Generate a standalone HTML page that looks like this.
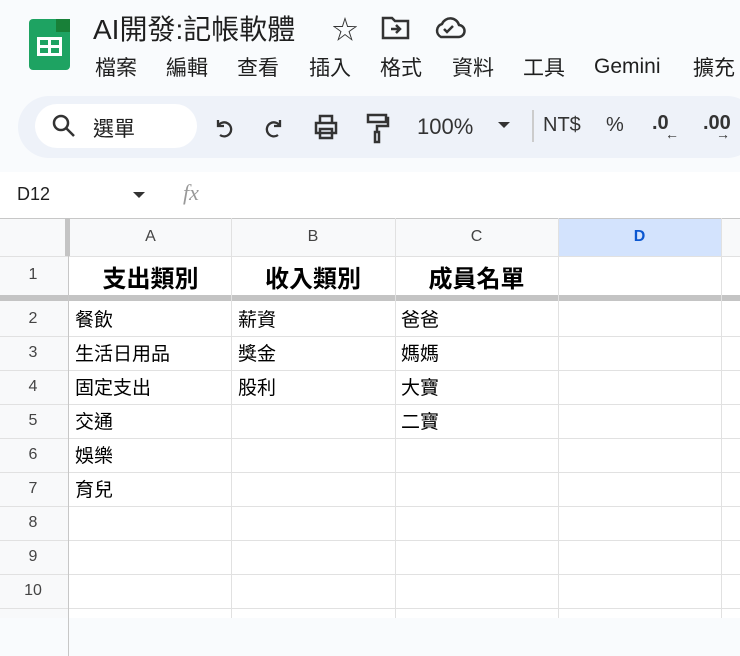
<!DOCTYPE html>
<html><head><meta charset="utf-8"><style>
*{margin:0;padding:0;box-sizing:border-box}
body{width:740px;height:617px;overflow:hidden;background:#f9fbfd;font-family:"Liberation Sans","Noto Sans CJK TC",sans-serif;position:relative;color:#1f1f1f}
.a{position:absolute}
.grid{position:absolute;left:0;top:218px;width:740px;height:400px;background:#fff}
.hl{position:absolute;background:#e1e1e1}
.cell{position:absolute;font-size:19px;color:#000}
.rn{position:absolute;left:0;width:66px;text-align:center;font-size:16px;color:#444}
.ch{position:absolute;top:0;height:38px;line-height:38px;text-align:center;font-size:16px;color:#444}
</style></head><body>
<div class="a" style="left:29px;top:19px;width:41px;height:51px;background:#1ea362;border-radius:4px;clip-path:polygon(0 0,70% 0,100% 25%,100% 100%,0 100%)"></div>
<div class="a" style="left:56px;top:19px;width:14px;height:13px;background:#188038"></div>
<div class="a" style="left:37px;top:37px;width:25px;height:19px;border:3px solid #fff;"></div>
<div class="a" style="left:37px;top:45px;width:25px;height:3px;background:#fff"></div>
<div class="a" style="left:48px;top:37px;width:3px;height:19px;background:#fff"></div>
<div class="a" style="left:93px;top:8px;font-size:28px;color:#1f1f1f">AI開發:記帳軟體</div>
<div class="a" style="left:332px;top:10px;font-size:26px;color:#333">☆</div>
<svg class="a" style="left:380px;top:14px" width="32" height="28" viewBox="0 0 32 28"><path d="M3 4h9l3 3h13v17H3z" fill="none" stroke="#333" stroke-width="2.5"/><path d="M11 15h9M16 11l4 4-4 4" fill="none" stroke="#333" stroke-width="2.5"/></svg>
<svg class="a" style="left:432px;top:14px" width="34" height="26" viewBox="0 0 34 26"><path d="M9 23h17a6 6 0 0 0 1-12 9 9 0 0 0-17-1 7 7 0 0 0-1 13z" fill="none" stroke="#333" stroke-width="2.5"/><path d="M12 15l3 3 6-6" fill="none" stroke="#333" stroke-width="2.5"/></svg>
<div class="a" style="left:95px;top:52px;font-size:21px;color:#1f1f1f;white-space:nowrap">
<span style="position:absolute;left:0">檔案</span><span style="position:absolute;left:71px">編輯</span><span style="position:absolute;left:142px">查看</span><span style="position:absolute;left:214px">插入</span><span style="position:absolute;left:285px">格式</span><span style="position:absolute;left:357px">資料</span><span style="position:absolute;left:428px">工具</span><span style="position:absolute;left:499px;top:3px">Gemini</span><span style="position:absolute;left:598px">擴充</span></div>
<div class="a" style="left:18px;top:96px;width:740px;height:62px;background:#eef2f9;border-radius:31px"></div>
<div class="a" style="left:35px;top:104px;width:162px;height:44px;background:#fff;border-radius:22px"></div>
<svg class="a" style="left:51px;top:113px" width="26" height="26" viewBox="0 0 26 26"><circle cx="10" cy="10" r="7" fill="none" stroke="#333" stroke-width="2.5"/><path d="M15 15l8 8" stroke="#333" stroke-width="2.5"/></svg>
<div class="a" style="left:93px;top:113px;font-size:21px">選單</div>
<svg class="a" style="left:212px;top:116px" width="24" height="24" viewBox="0 0 24 24"><path d="M6 4v6h6M6 10a7 7 0 1 1 2 9" fill="none" stroke="#333" stroke-width="2.3"/></svg>
<svg class="a" style="left:262px;top:116px" width="24" height="24" viewBox="0 0 24 24"><path d="M18 4v6h-6M18 10a7 7 0 1 0-2 9" fill="none" stroke="#333" stroke-width="2.3"/></svg>
<svg class="a" style="left:312px;top:113px" width="28" height="28" viewBox="0 0 28 28"><path d="M8 3h12v7H8zM4 10h20v10H4zM8 16h12v9H8z" fill="none" stroke="#333" stroke-width="2.5"/></svg>
<svg class="a" style="left:364px;top:112px" width="26" height="32" viewBox="0 0 26 32"><path d="M4 3h18v7H4zM22 6h2v8H13v6M11 20h4v10h-4z" fill="none" stroke="#333" stroke-width="2.5"/></svg>
<div class="a" style="left:417px;top:114px;font-size:22px;color:#333">100%</div>
<div class="a" style="left:498px;top:122px;width:0;height:0;border-left:6px solid transparent;border-right:6px solid transparent;border-top:6px solid #333"></div>
<div class="a" style="left:532px;top:110px;width:2px;height:32px;background:#ccc"></div>
<div class="a" style="left:543px;top:114px;font-size:20px;color:#333">NT$</div>
<div class="a" style="left:606px;top:114px;font-size:20px;color:#333">%</div>
<div class="a" style="left:652px;top:112px;font-size:20px;color:#333;font-weight:bold">.0</div>
<div class="a" style="left:665px;top:126px;font-size:14px;color:#333">←</div>
<div class="a" style="left:703px;top:112px;font-size:20px;color:#333;font-weight:bold">.00</div>
<div class="a" style="left:716px;top:126px;font-size:14px;color:#333">→</div>
<div class="a" style="left:0;top:172px;width:740px;height:46px;background:#fff"></div>
<div class="a" style="left:17px;top:184px;font-size:18px">D12</div>
<div class="a" style="left:133px;top:192px;border-left:6px solid transparent;border-right:6px solid transparent;border-top:6px solid #333"></div>
<div class="a" style="left:183px;top:180px;font-size:22px;color:#999;font-family:'Liberation Serif',serif;font-style:italic">fx</div>
<div class="grid">
<div class="a" style="left:0;top:0;width:740px;height:38px;background:#f8f9fa"></div>
<div class="a" style="left:0;top:0;width:68px;height:400px;background:#f8f9fa"></div>
<div class="a" style="left:558px;top:0;width:163px;height:38px;background:#d3e3fd"></div>
<div class="hl" style="left:0;top:0;width:740px;height:1px;background:#c7c7c7"></div>
<div class="hl" style="left:0;top:38px;width:740px;height:1px"></div>
<div class="hl" style="left:0;top:77px;width:740px;height:6px;background:#c4c4c4"></div>
<div class="hl" style="left:0;top:118px;width:740px;height:1px"></div>
<div class="hl" style="left:0;top:152px;width:740px;height:1px"></div>
<div class="hl" style="left:0;top:186px;width:740px;height:1px"></div>
<div class="hl" style="left:0;top:220px;width:740px;height:1px"></div>
<div class="hl" style="left:0;top:254px;width:740px;height:1px"></div>
<div class="hl" style="left:0;top:288px;width:740px;height:1px"></div>
<div class="hl" style="left:0;top:322px;width:740px;height:1px"></div>
<div class="hl" style="left:0;top:356px;width:740px;height:1px"></div>
<div class="hl" style="left:0;top:390px;width:740px;height:1px"></div>
<div class="hl" style="left:65px;top:0;width:5px;height:38px;background:#c4c4c4"></div>
<div class="hl" style="left:68px;top:38px;width:1px;height:400px;background:#c7c7c7"></div>
<div class="hl" style="left:231px;top:0;width:1px;height:400px"></div>
<div class="hl" style="left:395px;top:0;width:1px;height:400px"></div>
<div class="hl" style="left:558px;top:0;width:1px;height:400px"></div>
<div class="hl" style="left:721px;top:0;width:1px;height:400px"></div>
<div class="ch" style="left:70px;width:161px">A</div>
<div class="ch" style="left:231px;width:164px">B</div>
<div class="ch" style="left:395px;width:163px">C</div>
<div class="ch" style="left:558px;width:163px;color:#0b57d0;font-weight:bold">D</div>
<div class="rn" style="top:48px">1</div>
<div class="rn" style="top:92px">2</div>
<div class="rn" style="top:126px">3</div>
<div class="rn" style="top:160px">4</div>
<div class="rn" style="top:194px">5</div>
<div class="rn" style="top:228px">6</div>
<div class="rn" style="top:262px">7</div>
<div class="rn" style="top:296px">8</div>
<div class="rn" style="top:330px">9</div>
<div class="rn" style="top:364px">10</div>
<div class="cell" style="left:70px;width:161px;top:41px;text-align:center;font-size:24px;font-weight:bold">支出類別</div>
<div class="cell" style="left:231px;width:164px;top:41px;text-align:center;font-size:24px;font-weight:bold">收入類別</div>
<div class="cell" style="left:395px;width:163px;top:41px;text-align:center;font-size:24px;font-weight:bold">成員名單</div>
<div class="cell" style="left:75px;top:87px">餐飲</div>
<div class="cell" style="left:75px;top:121px">生活日用品</div>
<div class="cell" style="left:75px;top:155px">固定支出</div>
<div class="cell" style="left:75px;top:189px">交通</div>
<div class="cell" style="left:75px;top:223px">娛樂</div>
<div class="cell" style="left:75px;top:257px">育兒</div>
<div class="cell" style="left:238px;top:87px">薪資</div>
<div class="cell" style="left:238px;top:121px">獎金</div>
<div class="cell" style="left:238px;top:155px">股利</div>
<div class="cell" style="left:401px;top:87px">爸爸</div>
<div class="cell" style="left:401px;top:121px">媽媽</div>
<div class="cell" style="left:401px;top:155px">大寶</div>
<div class="cell" style="left:401px;top:189px">二寶</div>
</div>
</body></html>
